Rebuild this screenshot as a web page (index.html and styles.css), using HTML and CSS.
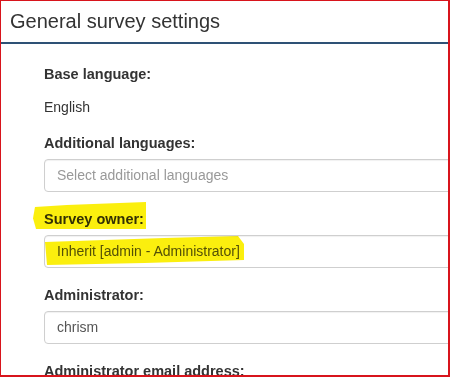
FILE: index.html
```html
<!DOCTYPE html>
<html>
<head>
<meta charset="utf-8">
<link rel="stylesheet" href="styles.css">
</head>
<body>
<div class="frame">
  <div class="header">General survey settings</div>
  <div class="content">
    <div class="label label-base">Base language:</div>
    <div class="static">English</div>
    <div class="group">
      <div class="label">Additional languages:</div>
      <div class="control placeholder">Select additional languages</div>
    </div>
    <div class="group">
      <div class="label"><span class="marked">Survey owner:<span class="marker marker-label"></span></span></div>
      <div class="control"><span class="marked">Inherit [admin - Administrator]<span class="marker marker-input"></span></span></div>
    </div>
    <div class="group">
      <div class="label">Administrator:</div>
      <div class="control">chrism</div>
    </div>
    <div class="group">
      <div class="label">Administrator email address:</div>
      <div class="control">&nbsp;</div>
    </div>
  </div>
</div>
</body>
</html>
```
FILE: styles.css
```css
html, body {
  margin: 0;
  padding: 0;
  background: #fff;
}

.frame {
  width: 450px;
  height: 377px;
  box-sizing: border-box;
  border-style: solid;
  border-color: #d8141c;
  border-width: 1px 2px 2px 1px;
  overflow: hidden;
  font-family: "Liberation Sans", Arial, sans-serif;
  color: #333;
  background: #fff;
}

.header {
  padding: 8px 8px 9px 9px;
  font-size: 20px;
  line-height: 24px;
  color: #333;
  border-bottom: 2px solid #2e5175;
}

.content {
  padding: 20px 0 0 43px;
}

.label {
  font-size: 14.5px;
  font-weight: bold;
  line-height: 20px;
  color: #333;
  margin-bottom: 6px;
  white-space: nowrap;
}

.label-base {
  margin-bottom: 13px;
}

.static {
  font-size: 14px;
  line-height: 20px;
  color: #333;
  margin-bottom: 16px;
}

.group {
  margin-bottom: 17px;
}

.control {
  width: 440px;
  height: 33px;
  box-sizing: border-box;
  border: 1px solid #cfcfcf;
  border-radius: 4px;
  box-shadow: inset 0 1px 1px rgba(0, 0, 0, 0.06);
  padding: 0 12px;
  font-size: 14px;
  line-height: 31px;
  color: #555;
  white-space: nowrap;
  background: #fff;
}

.placeholder {
  color: #999;
}

.marked {
  position: relative;
}

.marker {
  position: absolute;
  background: #fbef0e;
  mix-blend-mode: multiply;
  pointer-events: none;
}

.marker-label {
  left: -11px;
  top: -9px;
  width: 113px;
  height: 27px;
  clip-path: polygon(2px 5px, 30% 3px, 100% 0, 100% 100%, 3px 100%, 0 60%);
}

.marker-input {
  left: -12px;
  top: -7px;
  width: 199px;
  height: 29px;
  clip-path: polygon(0 6px, 60% 2px, 97% 0, 100% 8px, 100% 24px, 50% 27px, 2px 100%);
}
```
